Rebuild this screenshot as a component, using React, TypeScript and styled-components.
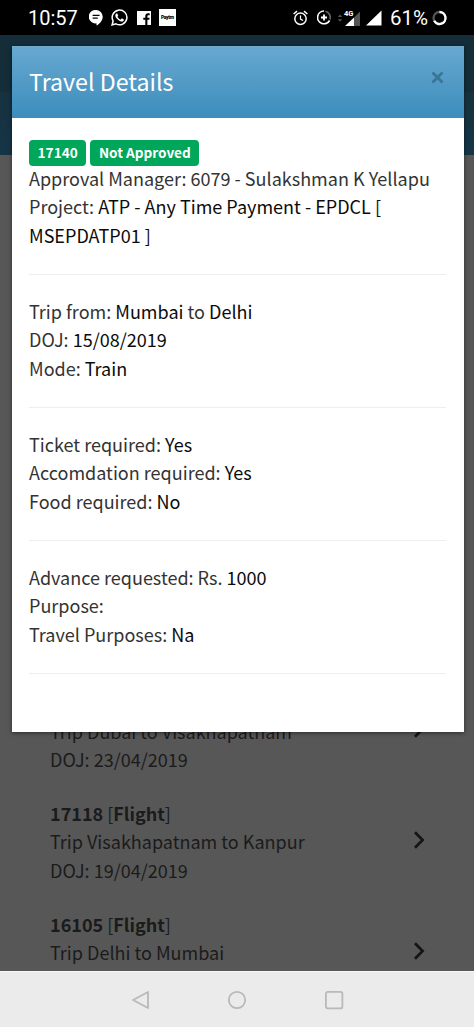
import React from 'react';
import styled, { createGlobalStyle } from 'styled-components';

const GlobalStyle = createGlobalStyle`
  * { box-sizing: border-box; }
  body { margin: 0; background: #575757; }
`;

const sans = `"Noto Sans CJK SC", "Open Sans", sans-serif`;

const Phone = styled.div`
  position: relative;
  width: 474px;
  height: 1027px;
  overflow: hidden;
  display: flex;
  flex-direction: column;
  background: #575757;
  font-family: ${sans};
  font-size: 18.03px;
  line-height: 28.5px;
`;

const StatusBar = styled.header`
  height: 35px;
  flex: none;
  display: flex;
  align-items: center;
  justify-content: space-between;
  padding: 0 27px 0 28px;
  background: #000;
  color: #fff;
  font: 20px/35px Roboto, sans-serif;
`;

const StatusGroup = styled.div<{ $gap: number }>`
  display: flex;
  align-items: center;
  gap: ${(p) => p.$gap}px;
  svg { display: block; flex: none; }
`;

const Clock = styled.span`
  width: 52px;
  padding-top: 2px;
  white-space: nowrap;
`;

const Percent = styled.span`
  width: 36px;
  padding-top: 2px;
  font-size: 20.5px;
  white-space: nowrap;
`;

const AppBar = styled.div`
  height: 120px;
  flex: none;
  background: linear-gradient(#142d39 0, #142d39 56px, #17313f 58px, #153547 100%);
`;

const TripList = styled.main`
  flex: 1;
  min-height: 0;
  overflow: hidden;
  padding: 533px 47px 0 50px;
  color: #1b1b1b;
`;

const TripRow = styled.section`
  display: flex;
  align-items: center;
  justify-content: space-between;
  height: 85.5px;
  margin-bottom: 25.3px;
  white-space: nowrap;
  svg { display: block; margin-top: -3px; }
`;

const Line = styled.p`
  margin: 0;
  min-height: 28.5px;
`;

const NavBar = styled.nav`
  height: 56px;
  flex: none;
  display: flex;
  justify-content: center;
  align-items: center;
  gap: 77px;
  background: #ebebeb;
  border-top: 1px solid #f7f7f7;
`;

const Modal = styled.div`
  position: absolute;
  top: 46px;
  left: 11.5px;
  width: 452px;
  height: 685.5px;
  background: #fff;
  box-shadow: 0 1px 4px rgba(0, 0, 0, 0.5);
`;

const ModalHeader = styled.div`
  height: 72px;
  display: flex;
  align-items: center;
  justify-content: space-between;
  padding: 0 19.5px 0 17.5px;
  background: linear-gradient(#67a8d0, #3c8dbc);
  border-top: 1px solid #74a9c9;
`;

const ModalTitle = styled.h1`
  margin: -3px 0 0;
  font-size: 23.2px;
  font-weight: 400;
  line-height: 34px;
  color: #fff;
`;

const Close = styled.button`
  display: block;
  padding: 0;
  margin-top: -11px;
  border: 0;
  background: none;
  line-height: 0;
`;

const ModalBody = styled.div`
  padding: 22px 17.5px;
  color: #333;
  b { font-weight: 400; color: #0b0b0b; }
`;

const Badges = styled.div`
  display: flex;
  gap: 4px;
  height: 23.9px;
`;

const Badge = styled.span`
  height: 26px;
  padding: 0 8.6px;
  border-radius: 4px;
  background: #00a65a;
  color: #fff;
  font-size: 13.6px;
  font-weight: 700;
  line-height: 25px;
`;

const Group = styled.section`
  padding-bottom: 24.9px;
  margin-bottom: 21.6px;
  border-bottom: 1px solid #eee;
`;

const Chevron = () => (
  <svg width="14" height="20" viewBox="0 0 14 20">
    <path d="M2 2.2 9.6 10 2 17.8" fill="none" stroke="#151515" strokeWidth="2.7" />
  </svg>
);

const PaytmIcon = () => (
  <svg width="17" height="17" viewBox="0 0 17 17">
    <path d="M0 0h17v17H0Z" fill="#fff" />
    <text x="8.5" y="10.3" textAnchor="middle" textLength="13" fontSize="5" fontWeight="900" fill="#000" fontFamily="Roboto">Paytm</text>
  </svg>
);

const trips = [
  { id: '', mode: '', route: 'Trip Dubai to Visakhapatnam', date: '23/04/2019' },
  { id: '17118', mode: 'Flight', route: 'Trip Visakhapatnam to Kanpur', date: '19/04/2019' },
  { id: '16105', mode: 'Flight', route: 'Trip Delhi to Mumbai', date: '' },
];

export default function App() {
  return (
    <Phone>
      <GlobalStyle />
      <StatusBar>
        <StatusGroup $gap={8.5}>
          <Clock>10:57</Clock>
          <svg width="14" height="16" viewBox="0 0 14 16">
            <path d="M7 0a6.7 6.7 0 0 1 6.7 6.7c0 4-3 7.2-6.2 8.8v-2.2A6.7 6.7 0 1 1 7 0Z" fill="#fff" />
            <path d="M3.6 5.4h7M3.6 8.2h5.2" stroke="#000" strokeWidth="1.3" />
          </svg>
          <svg width="17" height="17" viewBox="0 0 24 24">
            <path fill="#fff" d="M17.5 14.4c-.3-.2-1.8-.9-2-1-.3-.1-.5-.2-.7.1-.2.3-.8 1-.9 1.2-.2.2-.3.2-.6.1-.3-.2-1.3-.5-2.4-1.500-.9-.8-1.500-1.800-1.700-2.100-.2-.3 0-.5.1-.6l.5-.5c.1-.2.2-.3.3-.5.1-.2 0-.4 0-.5-.1-.2-.7-1.600-.9-2.200-.2-.6-.5-.5-.7-.5h-.6c-.2 0-.5.1-.8.4-.3.3-1 1-1 2.500s1.100 2.900 1.200 3.100c.2.2 2.100 3.200 5.100 4.500.7.3 1.300.5 1.700.6.7.2 1.400.2 1.900.1.600-.1 1.800-.7 2-1.400.2-.7.2-1.300.2-1.400-.1-.1-.3-.2-.6-.4Z" />
            <path d="M1.5 22.5 3 17A10.400 10.400 0 1 1 7 21Z" fill="none" stroke="#fff" strokeWidth="2.1" />
          </svg>
          <svg width="14" height="14" viewBox="0 0 14 14">
            <path d="M0 0h14v14h-3.600V8.700h1.900l.3-2h-2.200V5.400c0-.7.3-1.100 1.100-1.100h1.200V2.400c-.3 0-.9-.1-1.600-.1-1.800 0-2.800 1-2.800 2.900v1.500H6.300v2h2V14H0Z" fill="#fff" />
          </svg>
          <PaytmIcon />
        </StatusGroup>
        <StatusGroup $gap={8.5}>
          <svg width="15" height="16" viewBox="0 0 15 16" fill="none" stroke="#fff">
            <circle cx="7.5" cy="8.8" r="5.7" strokeWidth="1.5" />
            <path d="M7.5 5.5v3.600l2.500 1.500" strokeWidth="1.2" />
            <path d="M.6 4 4 1.200M11 1.200 14.400 4" strokeWidth="1.5" />
          </svg>
          <svg width="14" height="15" viewBox="0 0 14 15" fill="none">
            <path d="M7 1a6.400 6.400 0 1 0 5.600 9.500" stroke="#fff" strokeWidth="1.6" />
            <path d="M8.500 1.200a6.400 6.400 0 0 1 4.400 8.200" stroke="#666" strokeWidth="1.6" />
            <path d="M7 4.500v6M4 7.500h6" stroke="#fff" strokeWidth="1.8" />
          </svg>
          <svg width="24" height="18" viewBox="0 0 24 18" style={{ marginLeft: -2 }}>
            <path d="m.8 8 2.200-2.500L5.200 8ZM.8 10.200 3 12.700l2.200-2.500Z" fill="#555" />
            <path d="M23 2.500V17H17V8.500Z" fill="#555" />
            <path d="M17 8.500V17H8Z" fill="#fff" />
            <text x="7" y="7" fontSize="7.5" fontWeight="700" fill="#fff" fontFamily="Roboto">4G</text>
          </svg>
          <svg width="16" height="16" viewBox="0 0 16 16" style={{ marginLeft: -4 }}>
            <path d="M15.500.5v15H0Z" fill="#fff" />
          </svg>
          <Percent>61%</Percent>
          <svg width="15" height="16" viewBox="0 0 15 16" fill="none" strokeWidth="2.3" style={{ marginLeft: -2.5 }}>
            <circle cx="7.5" cy="8" r="6" stroke="#555" />
            <path d="M7.500 2a6 6 0 1 1-5.300 8.800" stroke="#fff" />
          </svg>
        </StatusGroup>
      </StatusBar>
      <AppBar />
      <TripList>
        {trips.map((t) => (
          <TripRow key={t.route}>
            <div>
              <Line>
                {t.id && (
                  <>
                    <strong>{t.id}</strong> [<strong>{t.mode}</strong>]
                  </>
                )}
              </Line>
              <Line>{t.route}</Line>
              <Line>{t.date && `DOJ: ${t.date}`}</Line>
            </div>
            <Chevron />
          </TripRow>
        ))}
      </TripList>
      <NavBar>
        <svg width="20" height="20" viewBox="0 0 20 20" fill="none" stroke="#b9b9b9" strokeWidth="1.8" strokeLinejoin="round">
          <path d="M18 2v16L3 10Z" />
        </svg>
        <svg width="20" height="20" viewBox="0 0 20 20" fill="none" stroke="#b9b9b9" strokeWidth="1.8">
          <circle cx="10" cy="10" r="8.2" />
        </svg>
        <svg width="20" height="20" viewBox="0 0 20 20" fill="none" stroke="#b9b9b9" strokeWidth="1.8">
          <rect x="1.9" y="1.9" width="16.5" height="16.5" rx="2" />
        </svg>
      </NavBar>
      <Modal>
        <ModalHeader>
          <ModalTitle>Travel Details</ModalTitle>
          <Close aria-label="Close">
            <svg width="13" height="13" viewBox="0 0 13 13">
              <path d="m1.500 1.500 10 10m0-10-10 10" stroke="#397595" strokeWidth="2.8" />
            </svg>
          </Close>
        </ModalHeader>
        <ModalBody>
          <Badges>
            <Badge>17140</Badge>
            <Badge>Not Approved</Badge>
          </Badges>
          <Group>
            <Line>Approval Manager: 6079 - Sulakshman K Yellapu</Line>
            <Line>Project: <b>ATP - Any Time Payment - EPDCL [ MSEPDATP01 ]</b></Line>
          </Group>
          <Group>
            <Line>Trip from: <b>Mumbai</b> to <b>Delhi</b></Line>
            <Line>DOJ: <b>15/08/2019</b></Line>
            <Line>Mode: <b>Train</b></Line>
          </Group>
          <Group>
            <Line>Ticket required: <b>Yes</b></Line>
            <Line>Accomdation required: <b>Yes</b></Line>
            <Line>Food required: <b>No</b></Line>
          </Group>
          <Group>
            <Line>Advance requested: Rs. <b>1000</b></Line>
            <Line>Purpose:</Line>
            <Line>Travel Purposes: <b>Na</b></Line>
          </Group>
        </ModalBody>
      </Modal>
    </Phone>
  );
}
